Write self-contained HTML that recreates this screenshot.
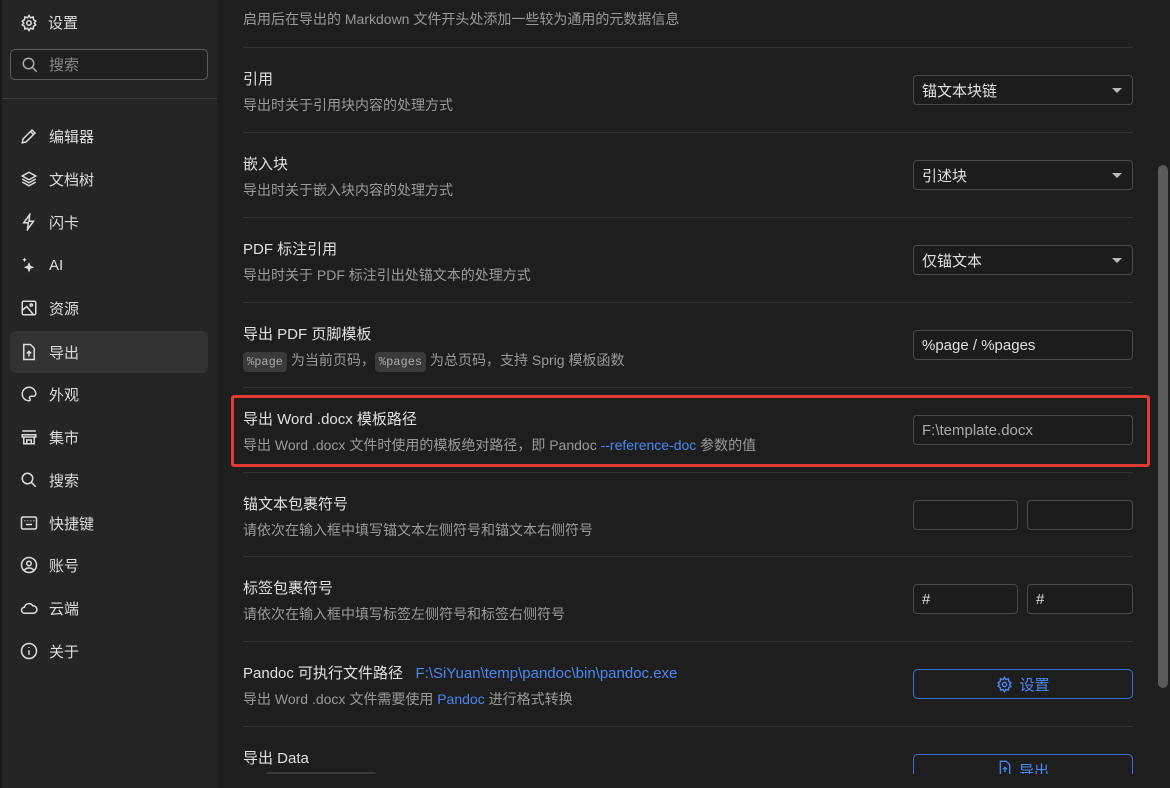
<!DOCTYPE html>
<html><head><meta charset="utf-8"><style>
*{box-sizing:border-box;margin:0;padding:0}
html,body{width:1170px;height:788px;overflow:hidden}
body{background:#1e1e1e;font-family:"Liberation Sans","Noto Sans CJK SC",sans-serif;color:#d4d4d4;position:relative}
.side{position:absolute;left:0;top:0;width:217px;height:788px;background:#252525;border-left:2px solid #1a1a1a}
.side .hd{position:absolute;left:18px;top:12px;font-size:15px;display:flex;align-items:center;gap:10px;color:#ddd}
.search{position:absolute;left:8px;top:49px;width:198px;height:31px;border:1px solid #5a5a5a;border-radius:5px;background:#1f1f1f;display:flex;align-items:center;padding-left:10px;gap:10px;color:#888;font-size:15px}
.hr{position:absolute;left:0;top:98px;width:215px;height:1px;background:#3a3a3a}
.item{position:absolute;left:8px;width:198px;height:42px;display:flex;align-items:center;padding-left:10px;gap:11px;font-size:15px;color:#ddd;border-radius:6px}
.item.act{background:#333}
svg{flex:none}
.row{position:absolute;left:243px;width:890px;border-top:1px solid #333;height:85px}
.t{position:absolute;left:0;top:20px;font-size:15px;color:#e0e0e0;white-space:nowrap}
.d{position:absolute;left:0;top:47px;font-size:14px;color:#9a9a9a;white-space:nowrap}
.sel{position:absolute;left:670px;top:27px;width:220px;height:30px;border:1px solid #4a4a4a;border-radius:4px;background:#1c1c1c;font-size:15px;color:#e0e0e0;padding:0 8px;display:flex;align-items:center}
.sel:after{content:"";position:absolute;right:10px;top:12px;border:5px solid transparent;border-top:5px solid #bbb}
.inp{position:absolute;top:27px;height:30px;border:1px solid #4a4a4a;border-radius:4px;background:#1c1c1c;font-size:15px;color:#e0e0e0;padding:0 8px;display:flex;align-items:center}
.btn{position:absolute;left:670px;top:27px;width:220px;height:30px;border:1px solid #3b6fd6;border-radius:5px;color:#4a86f0;font-size:15px;display:flex;align-items:center;justify-content:center;gap:6px}
code{background:#3a3a3a;border-radius:4px;padding:3px 4px;font-family:"Liberation Mono",monospace;font-size:12px;color:#aaa}
a{color:#4a86f0;text-decoration:none}
</style></head><body>
<div class="side">
<div class="hd"><svg width="18" height="18" viewBox="0 0 24 24" fill="none" stroke="#ddd" stroke-width="2"><circle cx="12" cy="12" r="3"/><path d="M12 2l2 3 3.5-1 .5 3.5 3 2-2 2.5 2 2.5-3 2-.5 3.5-3.5-1-2 3-2-3-3.5 1-.5-3.5-3-2 2-2.5-2-2.5 3-2 .5-3.5 3.5 1z"/></svg>设置</div>
<div class="search"><svg width="18" height="18" viewBox="0 0 24 24" fill="none" stroke="#aaa" stroke-width="2"><circle cx="10" cy="10" r="7"/><path d="M15 15l6 6"/></svg>搜索</div>
<div class="hr"></div>
<div class="item" style="top:115px"><svg width="18" height="18" viewBox="0 0 24 24" fill="none" stroke="#ddd" stroke-width="2"><path d="M3 21l1-5L16 4l4 4L8 20z M14 6l4 4"/></svg>编辑器</div>
<div class="item" style="top:158px"><svg width="18" height="18" viewBox="0 0 24 24" fill="none" stroke="#ddd" stroke-width="2"><path d="M12 3l9 5-9 5-9-5z M3 12l9 5 9-5 M3 16l9 5 9-5"/></svg>文档树</div>
<div class="item" style="top:201px"><svg width="18" height="18" viewBox="0 0 24 24" fill="none" stroke="#ddd" stroke-width="2"><path d="M13 2L5 13h6l-1 9 8-11h-6z"/></svg>闪卡</div>
<div class="item" style="top:244px"><svg width="18" height="18" viewBox="0 0 24 24" fill="#ddd"><path d="M12 8l2 5 5 2-5 2-2 5-2-5-5-2 5-2z M6 2l1 2 2 1-2 1-1 2-1-2-2-1 2-1z"/></svg>AI</div>
<div class="item" style="top:287px"><svg width="18" height="18" viewBox="0 0 24 24" fill="none" stroke="#ddd" stroke-width="2"><rect x="3" y="3" width="18" height="18" rx="2"/><circle cx="15" cy="8" r="1.5"/><path d="M3 15l6-5 9 11"/></svg>资源</div>
<div class="item act" style="top:331px"><svg width="18" height="18" viewBox="0 0 24 24" fill="none" stroke="#ddd" stroke-width="2"><path d="M5 2h9l5 5v15H5z M12 18v-7 M9 14l3-3 3 3"/></svg>导出</div>
<div class="item" style="top:373px"><svg width="18" height="18" viewBox="0 0 24 24" fill="none" stroke="#ddd" stroke-width="2"><path d="M12 3a9 9 0 1 0 0 18c2 0 2-2 1-3s0-3 2-3h3a3 3 0 0 0 3-3c0-5-4-9-9-9z"/></svg>外观</div>
<div class="item" style="top:416px"><svg width="18" height="18" viewBox="0 0 24 24" fill="none" stroke="#ddd" stroke-width="2"><path d="M3 4h18 M3 9h18v3H3z M5 12v9h14v-9 M9 21v-5h6v5"/></svg>集市</div>
<div class="item" style="top:459px"><svg width="18" height="18" viewBox="0 0 24 24" fill="none" stroke="#ddd" stroke-width="2"><circle cx="10" cy="10" r="7"/><path d="M15 15l6 6"/></svg>搜索</div>
<div class="item" style="top:502px"><svg width="18" height="18" viewBox="0 0 24 24" fill="none" stroke="#ddd" stroke-width="2"><rect x="2" y="4" width="20" height="16" rx="2"/><path d="M6 9h1M10 9h1M14 9h1M18 9h1M8 14h8"/></svg>快捷键</div>
<div class="item" style="top:544px"><svg width="18" height="18" viewBox="0 0 24 24" fill="none" stroke="#ddd" stroke-width="2"><circle cx="12" cy="12" r="10"/><circle cx="12" cy="10" r="3"/><path d="M6 19c2-4 10-4 12 0"/></svg>账号</div>
<div class="item" style="top:587px"><svg width="18" height="18" viewBox="0 0 24 24" fill="none" stroke="#ddd" stroke-width="2"><path d="M6 19a4 4 0 0 1 0-8 6 6 0 0 1 11-2 5 5 0 0 1 1 10z"/></svg>云端</div>
<div class="item" style="top:630px"><svg width="18" height="18" viewBox="0 0 24 24" fill="none" stroke="#ddd" stroke-width="2"><circle cx="12" cy="12" r="10"/><path d="M12 11v6M12 7v1"/></svg>关于</div>
</div>

<div style="position:absolute;left:243px;top:9px;font-size:14px;color:#9a9a9a">启用后在导出的 Markdown 文件开头处添加一些较为通用的元数据信息</div>

<div class="row" style="top:47px"><div class="t">引用</div><div class="d">导出时关于引用块内容的处理方式</div><div class="sel">锚文本块链</div></div>
<div class="row" style="top:132px"><div class="t">嵌入块</div><div class="d">导出时关于嵌入块内容的处理方式</div><div class="sel">引述块</div></div>
<div class="row" style="top:217px"><div class="t">PDF 标注引用</div><div class="d">导出时关于 PDF 标注引出处锚文本的处理方式</div><div class="sel">仅锚文本</div></div>
<div class="row" style="top:302px"><div class="t">导出 PDF 页脚模板</div><div class="d"><code>%page</code> 为当前页码，<code>%pages</code> 为总页码，支持 Sprig 模板函数</div><div class="inp" style="left:670px;width:220px">%page / %pages</div></div>
<div class="row" style="top:387px"><div class="t">导出 Word .docx 模板路径</div><div class="d">导出 Word .docx 文件时使用的模板绝对路径，即 Pandoc <a>--reference-doc</a> 参数的值</div><div class="inp" style="left:670px;width:220px;color:#aaa">F:\template.docx</div></div>
<div class="row" style="top:472px"><div class="t">锚文本包裹符号</div><div class="d">请依次在输入框中填写锚文本左侧符号和锚文本右侧符号</div><div class="inp" style="left:670px;width:105px"></div><div class="inp" style="left:784px;width:106px"></div></div>
<div class="row" style="top:556px"><div class="t">标签包裹符号</div><div class="d">请依次在输入框中填写标签左侧符号和标签右侧符号</div><div class="inp" style="left:670px;width:105px">#</div><div class="inp" style="left:784px;width:106px">#</div></div>
<div class="row" style="top:641px"><div class="t">Pandoc 可执行文件路径 &nbsp;&nbsp;<a>F:\SiYuan\temp\pandoc\bin\pandoc.exe</a></div><div class="d">导出 Word .docx 文件需要使用 <a>Pandoc</a> 进行格式转换</div><div class="btn"><svg width="17" height="17" viewBox="0 0 24 24" fill="none" stroke="#4a86f0" stroke-width="2"><circle cx="12" cy="12" r="3"/><path d="M12 2l2 3 3.5-1 .5 3.5 3 2-2 2.5 2 2.5-3 2-.5 3.5-3.5-1-2 3-2-3-3.5 1-.5-3.5-3-2 2-2.5-2-2.5 3-2 .5-3.5 3.5 1z"/></svg>设置</div></div>
<div class="row" style="top:726px;height:48px;overflow:hidden"><div class="t">导出 Data</div><div style="position:absolute;left:23px;top:45px;width:110px;height:4px;background:#3a3a3a;border-radius:2px"></div><div class="btn" style="height:40px;align-items:flex-start;padding-top:5px"><svg width="16" height="16" viewBox="0 0 24 24" fill="none" stroke="#4a86f0" stroke-width="2"><path d="M5 2h9l5 5v15H5z M12 18v-7 M9 14l3-3 3 3"/></svg>导出</div></div>

<div style="position:absolute;left:231px;top:395px;width:919px;height:72px;border:3px solid #e53935;border-radius:3px"></div>
<div style="position:absolute;left:1158px;top:165px;width:10px;height:523px;background:#5a5a5a;border-radius:5px"></div>
</body></html>
